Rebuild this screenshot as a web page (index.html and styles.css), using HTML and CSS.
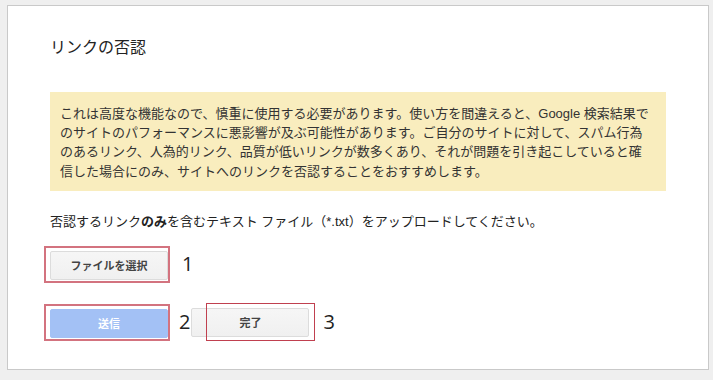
FILE: index.html
```html
<!DOCTYPE html>
<html lang="ja">
<head>
  <meta charset="UTF-8" />
  <title>リンクの否認</title>
  <link rel="stylesheet" href="styles.css">
</head>
<body>
  <div class="dialog">
    <div class="dialog-title">リンクの否認</div>

    <div class="warning">
      これは高度な機能なので、慎重に使用する必要があります。使い方を間違えると、Google 検索結果でのサイトのパフォーマンスに悪影響が及ぶ可能性があります。ご自分のサイトに対して、スパム行為のあるリンク、人為的リンク、品質が低いリンクが数多くあり、それが問題を引き起こしていると確信した場合にのみ、サイトへのリンクを否認することをおすすめします。
    </div>

    <p class="upload-text">否認するリンク<b>のみ</b>を含むテキスト ファイル（*.txt）をアップロードしてください。</p>

    <div class="row row-file">
      <div class="mark">
        <button class="btn">ファイルを選択</button>
      </div>
      <span class="step step-1">1</span>
    </div>

    <div class="row row-submit">
      <div class="mark">
        <button class="btn btn-blue">送信</button>
      </div>
      <span class="step step-2">2</span>
      <div class="done-wrap">
        <button class="btn">完了</button>
        <div class="mark-over"></div>
      </div>
      <span class="step step-3">3</span>
    </div>
  </div>
</body>
</html>
```

FILE: styles.css
```css
* { box-sizing: border-box; }
body {
  margin: 0;
  background-color: #efefef;
  font-family: "Liberation Sans", "Noto Sans CJK JP", sans-serif;
  color: #222;
  height: 380px;
  overflow: hidden;
}
.dialog {
  width: 702px;
  height: 365px;
  margin: 5px 0 0 7px;
  background: #fff;
  border: 1px solid #c9c9c9;
  padding: 32px 0 0 42px;
}
.dialog-title {
  font-size: 16px;
  line-height: 20px;
  color: #222;
}
.warning {
  margin-top: 34px;
  width: 616px;
  background-color: #f9edbe;
  padding: 12px 13px 10px 10px;
  font-size: 13px;
  line-height: 19.2px;
  color: #333;
}
.upload-text {
  margin: 21px 0 0 0;
  font-size: 13px;
  line-height: 19px;
  color: #222;
}
.upload-text b { font-weight: bold; }
.row {
  display: flex;
  align-items: center;
}
.row-file { margin-top: 15px; }
.row-submit { margin-top: 21px; }
.mark {
  margin-left: -6px;
  border: 2px solid #d3737f;
  padding: 3px 0 1px 4px;
  width: 126px;
}
.btn {
  display: block;
  width: 118px;
  height: 29px;
  font-family: "Liberation Sans", "Noto Sans CJK JP", sans-serif;
  font-size: 11px;
  font-weight: bold;
  color: #444;
  background: linear-gradient(#f6f6f6, #f0f0f0);
  border: 1px solid #dcdcdc;
  border-radius: 2px;
  padding: 0;
}
.btn-blue {
  background: #a3c1f5;
  border-color: #a3c1f5;
  color: #fff;
}
.step {
  font-family: "Open Sans", sans-serif;
  font-size: 20px;
  line-height: 24px;
  color: #222;
}
.step-1 { margin-left: 12px; }
.step-2 { margin-left: 9px; }
.step-3 { margin-left: 14px; }
.done-wrap {
  position: relative;
  margin-left: 1px;
}
.mark-over {
  position: absolute;
  left: 15px;
  top: -5px;
  width: 109px;
  height: 38px;
  border: 1px solid #c0404f;
}
```
